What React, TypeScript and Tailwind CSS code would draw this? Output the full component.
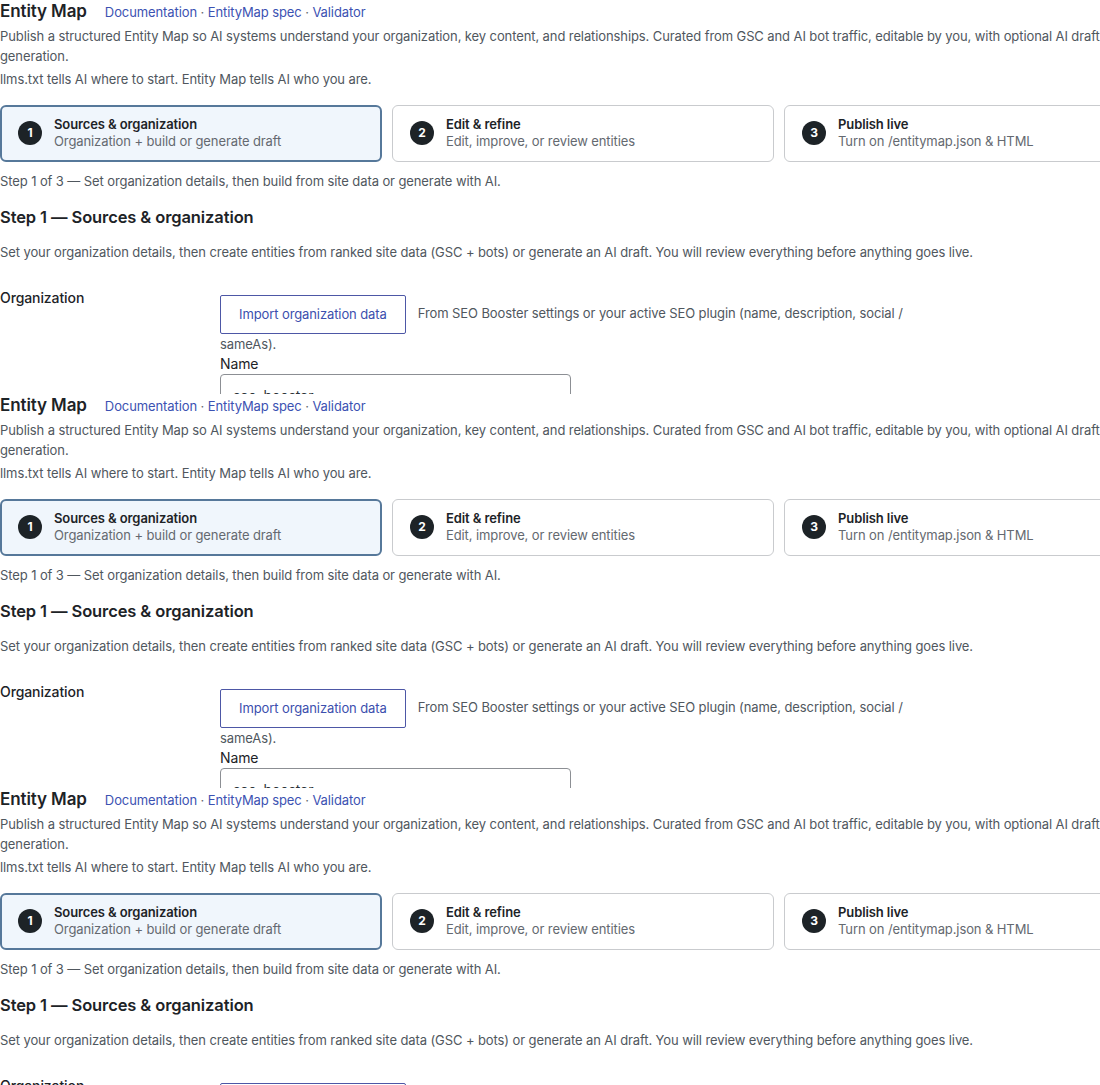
import React from 'react';

interface Step {
  num: number;
  title: string;
  subtitle: string;
  active?: boolean;
}

const steps: Step[] = [
  { num: 1, title: 'Sources & organization', subtitle: 'Organization + build or generate draft', active: true },
  { num: 2, title: 'Edit & refine', subtitle: 'Edit, improve, or review entities' },
  { num: 3, title: 'Publish live', subtitle: 'Turn on /entitymap.json & HTML' },
];

function StepCard({ step }: { step: Step }) {
  return (
    <div
      className={
        step.active
          ? 'flex h-[57px] items-center gap-[12px] rounded-[6px] border-2 border-[#56789a] bg-[#f0f6fc] pl-[16px]'
          : 'flex h-[57px] items-center gap-[12px] rounded-[6px] border border-[#c9cbce] bg-white pl-[17px]'
      }
    >
      <span className="flex h-[24px] w-[24px] shrink-0 items-center justify-center rounded-full bg-[#1d2327] text-[12px] font-bold text-white">
        {step.num}
      </span>
      <div className="flex flex-col">
        <span className="text-[13px] font-semibold leading-[17px] text-[#1d2327]">{step.title}</span>
        <span className="text-[13px] leading-[17px] text-[#646970]">{step.subtitle}</span>
      </div>
    </div>
  );
}

function EntityMapPanel() {
  return (
    <section className="h-[394px] overflow-hidden">
      {/* Header */}
      <div className="flex items-baseline gap-[18px]">
        <h1 className="text-[17px] font-semibold leading-[22px] text-[#1d2327]">Entity Map</h1>
        <p className="text-[13px] text-[#3c52b2]">
          <a href="#">Documentation</a>
          <span className="text-[#646970]"> · </span>
          <a href="#">EntityMap spec</a>
          <span className="text-[#646970]"> · </span>
          <a href="#">Validator</a>
        </p>
      </div>
      <p className="mt-[3px] text-[13px] leading-[20px] text-[#50575e]">
        Publish a structured Entity Map so AI systems understand your organization, key content, and relationships.
        Curated from GSC and AI bot traffic, editable by you, with optional AI draft generation.
      </p>
      <p className="mt-[3px] text-[13px] leading-[20px] text-[#50575e]">
        llms.txt tells AI where to start. Entity Map tells AI who you are.
      </p>

      {/* Stepper */}
      <div className="mt-[16px] grid grid-cols-3 gap-[10px]">
        {steps.map((s) => (
          <StepCard key={s.num} step={s} />
        ))}
      </div>
      <p className="mt-[9px] text-[13px] leading-[20px] text-[#50575e]">
        Step 1 of 3 — Set organization details, then build from site data or generate with AI.
      </p>

      {/* Step 1 */}
      <h2 className="mt-[14px] text-[16.5px] font-semibold leading-[24px] text-[#1d2327]">
        Step 1 — Sources &amp; organization
      </h2>
      <p className="mt-[13px] text-[13px] leading-[20px] text-[#50575e]">
        Set your organization details, then create entities from ranked site data (GSC + bots) or generate an AI draft.
        You will review everything before anything goes live.
      </p>

      <div className="mt-[29px] flex items-start">
        <div className="w-[220px] shrink-0 text-[14px] font-medium leading-[14px] text-[#1d2327]">Organization</div>
        <div className="mt-[4px] w-[700px]">
          <p className="text-[13px] leading-[20px] text-[#50575e]">
            <button
              type="button"
              className="inline-flex h-[39px] items-center rounded-[2px] border border-[#4d57a6] bg-white px-[18px] align-middle text-[13px] text-[#3c4fae]"
            >
              Import organization data
            </button>
            <span className="ml-[12px]">
              From SEO Booster settings or your active SEO plugin (name, description, social / sameAs).
            </span>
          </p>
          <label className="block text-[14px] leading-[20px] text-[#1d2327]">Name</label>
          <input
            type="text"
            defaultValue="seo_booster"
            className="h-[36px] w-[351px] rounded-[4px] border border-[#8c8f94] bg-white px-[12px] pt-[8px] text-[14px] text-[#2c3338]"
          />
        </div>
      </div>
    </section>
  );
}

export default function App() {
  return (
    <div className="w-[1100px] overflow-hidden bg-white font-['Inter',sans-serif] tracking-[-0.1px]">
      <div className="w-[1166px]">
        <EntityMapPanel />
        <EntityMapPanel />
        <EntityMapPanel />
      </div>
    </div>
  );
}
